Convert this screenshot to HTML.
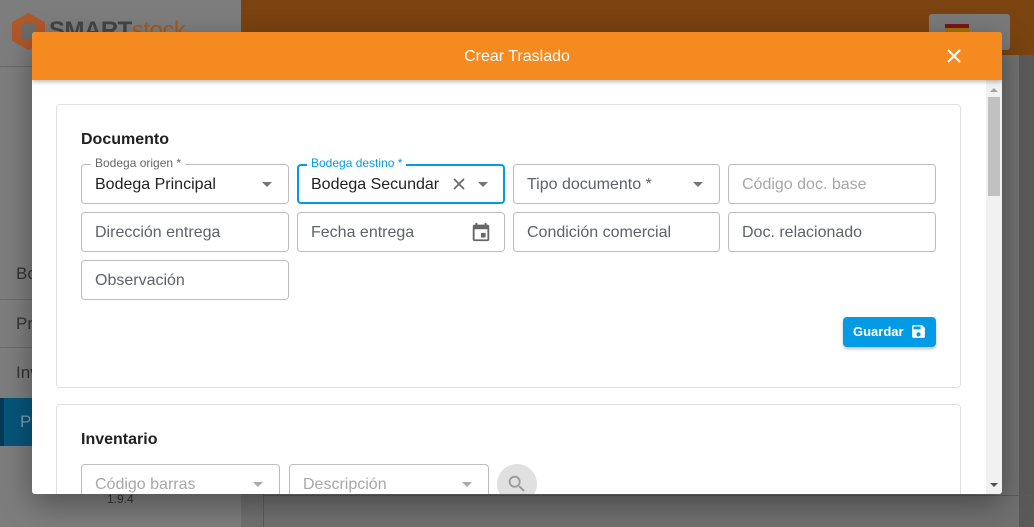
<!DOCTYPE html>
<html><head><meta charset="utf-8"><style>
*{box-sizing:border-box;margin:0;padding:0}
body{width:1034px;height:527px;overflow:hidden;position:relative;font-family:"Liberation Sans",Roboto,sans-serif;background:#707070}
.abs{position:absolute}
.f{position:absolute;border:1px solid #bdbdbd;border-radius:4px;height:40px;font-size:16px;color:#5f6368;padding-left:13px;line-height:40px;background:#fff}
.f.v{color:#212121}
.f.ph{color:#a8a8a8}
.lbl{position:absolute;top:-9px;left:9px;background:#fff;padding:0 4px;font-size:12px;line-height:14px;color:#666}
.arr{position:absolute;right:16px;top:17px;width:0;height:0;border-left:5px solid transparent;border-right:5px solid transparent;border-top:5px solid #757575}
.card{position:absolute;left:24px;width:905px;border:1px solid #e0e0e0;border-radius:4px;background:#fff}
h3{position:absolute;font-size:16px;font-weight:bold;color:#212121}
</style></head><body>
<div class="abs" style="left:0;top:0;width:241px;height:527px;background:#7d7d7d"></div>
<div class="abs" style="left:0;top:66px;width:241px;height:1px;background:#6a6a6a"></div>
<div class="abs" style="left:12px;top:13px;width:33px;height:37px;background:#b0582a;clip-path:polygon(50% 0,100% 25%,100% 75%,50% 100%,0 75%,0 25%)"></div>
<div class="abs" style="left:21px;top:23px;width:15px;height:17px;background:#6c6c6c"></div>
<div class="abs" style="left:49px;top:17px;font-size:24px;font-weight:bold;color:#444;letter-spacing:-0.5px">SMART<span style="color:#a65a1e;font-weight:normal">stock</span></div>
<div class="abs" style="left:0;top:250px;width:241px;height:50px;border-bottom:1px solid #6c6c6c;font-size:17px;color:#333;padding:14px 16px">Bo</div>
<div class="abs" style="left:0;top:300px;width:241px;height:48px;border-bottom:1px solid #6c6c6c;font-size:17px;color:#333;padding:14px 16px">Pr</div>
<div class="abs" style="left:0;top:349px;width:241px;height:48px;font-size:17px;color:#333;padding:14px 16px">Inv</div>
<div class="abs" style="left:0;top:398px;width:241px;height:48px;background:#06557a;border-left:4px solid #043a55;font-size:17px;color:#7a9bb0;padding:14px 16px">Pr</div>
<div class="abs" style="left:107px;top:492px;font-size:12px;color:#333">1.9.4</div>
<div class="abs" style="left:241px;top:0;width:793px;height:55px;background:#7a4310"></div>
<div class="abs" style="left:929px;top:14px;width:81px;height:36px;background:#7a7a7a;border-radius:3px"></div>
<div class="abs" style="left:945px;top:24px;width:24px;height:12px;background:#a0720a;border-top:4px solid #7a1515"></div>
<div class="abs" style="left:1019px;top:55px;width:15px;height:472px;background:#5a5a5a"></div>
<div class="abs" style="left:263px;top:495px;width:771px;height:1px;background:#5c5c5c"></div>
<div class="abs" style="left:263px;top:494px;width:1px;height:33px;background:#5c5c5c"></div>
<div class="abs" style="left:32px;top:32px;width:970px;height:462px;background:#fff;border-radius:3px;overflow:hidden;box-shadow:0 10px 30px rgba(0,0,0,.35)">
 <div class="abs" style="left:0;top:0;width:970px;height:48px;background:#f58a20;box-shadow:0 2px 4px rgba(0,0,0,.25);z-index:2">
  <div class="abs" style="left:0;width:970px;text-align:center;top:16px;color:#fff;font-size:16px">Crear Traslado</div>
  <svg class="abs" style="left:915px;top:17px" width="14" height="14" viewBox="0 0 14 14"><path d="M1 1L13 13M13 1L1 13" stroke="#fff" stroke-width="2"/></svg>
 </div>
 <div class="abs" style="left:954px;top:48px;width:16px;height:414px;background:#f1f1f1">
  <div class="abs" style="left:2px;top:17px;width:12px;height:99px;background:#c1c1c1"></div>
  <div class="abs" style="left:4px;top:8px;border-left:4px solid transparent;border-right:4px solid transparent;border-bottom:4px solid #a3a3a3"></div>
  <div class="abs" style="left:4px;top:403px;border-left:4px solid transparent;border-right:4px solid transparent;border-top:4px solid #505050"></div>
 </div>
 <div class="card" style="top:72px;height:284px">
  <h3 style="left:24px;top:26px">Documento</h3>
 </div>
 <div class="card" style="top:372px;height:120px">
  <h3 style="left:24px;top:26px">Inventario</h3>
 </div>
 <div class="f v" style="left:49px;top:132px;width:208px"><span class="lbl">Bodega origen *</span>Bodega Principal<div class="arr"></div></div>
 <div class="f v" style="left:265px;top:132px;width:208px;border:2px solid #039be5;padding-left:12px;line-height:38px"><span class="lbl" style="color:#039be5;top:-10px;left:8px">Bodega destino *</span>Bodega Secundar
  <svg class="abs" style="left:154px;top:12px" width="12" height="12" viewBox="0 0 12 12"><path d="M1 1L11 11M11 1L1 11" stroke="#666" stroke-width="1.6"/></svg><div class="arr" style="right:15px;top:16px"></div></div>
 <div class="f" style="left:481px;top:132px;width:207px">Tipo documento *<div class="arr"></div></div>
 <div class="f ph" style="left:696px;top:132px;width:208px">Código doc. base</div>
 <div class="f" style="left:49px;top:180px;width:208px">Dirección entrega</div>
 <div class="f" style="left:265px;top:180px;width:208px">Fecha entrega
  <svg class="abs" style="left:172px;top:8px" width="22" height="22" viewBox="0 0 24 24"><path fill="#666" d="M19 4h-1V2h-2v2H8V2H6v2H5c-1.1 0-2 .9-2 2v14c0 1.1.9 2 2 2h14c1.1 0 2-.9 2-2V6c0-1.1-.9-2-2-2zm0 16H5V9h14v11zm-7-7h5v5h-5z"/></svg></div>
 <div class="f" style="left:481px;top:180px;width:207px">Condición comercial</div>
 <div class="f" style="left:696px;top:180px;width:208px">Doc. relacionado</div>
 <div class="f" style="left:49px;top:228px;width:208px">Observación</div>
 <div class="abs" style="left:811px;top:285px;width:93px;height:30px;background:#039be5;border-radius:4px;box-shadow:0 2px 3px rgba(0,0,0,.25);color:#fff;font-size:13px;font-weight:bold;line-height:30px;padding-left:10px">Guardar
  <svg class="abs" style="left:67px;top:6px" width="17" height="17" viewBox="0 0 24 24"><path fill="#fff" d="M17 3H5c-1.1 0-2 .9-2 2v14c0 1.1.9 2 2 2h14c1.1 0 2-.9 2-2V7l-4-4zm-5 16c-1.7 0-3-1.3-3-3s1.3-3 3-3 3 1.3 3 3-1.3 3-3 3zm3-10H5V5h10v4z"/></svg></div>
 <div class="f ph" style="left:49px;top:432px;width:199px">Código barras<div class="arr" style="border-top-color:#aaa"></div></div>
 <div class="f ph" style="left:257px;top:432px;width:200px">Descripción<div class="arr" style="border-top-color:#aaa"></div></div>
 <div class="abs" style="left:465px;top:432px;width:40px;height:40px;border-radius:50%;background:#e0e0e0">
  <svg class="abs" style="left:9px;top:9px" width="22" height="22" viewBox="0 0 24 24"><path fill="#999" d="M15.5 14h-.8l-.3-.3A6.5 6.5 0 1 0 9.5 16a6.5 6.5 0 0 0 4.2-1.6l.3.3v.8l5 5 1.5-1.5-5-5zm-6 0C7 14 5 12 5 9.5S7 5 9.5 5 14 7 14 9.5 12 14 9.5 14z"/></svg></div>
</div>
</body></html>
